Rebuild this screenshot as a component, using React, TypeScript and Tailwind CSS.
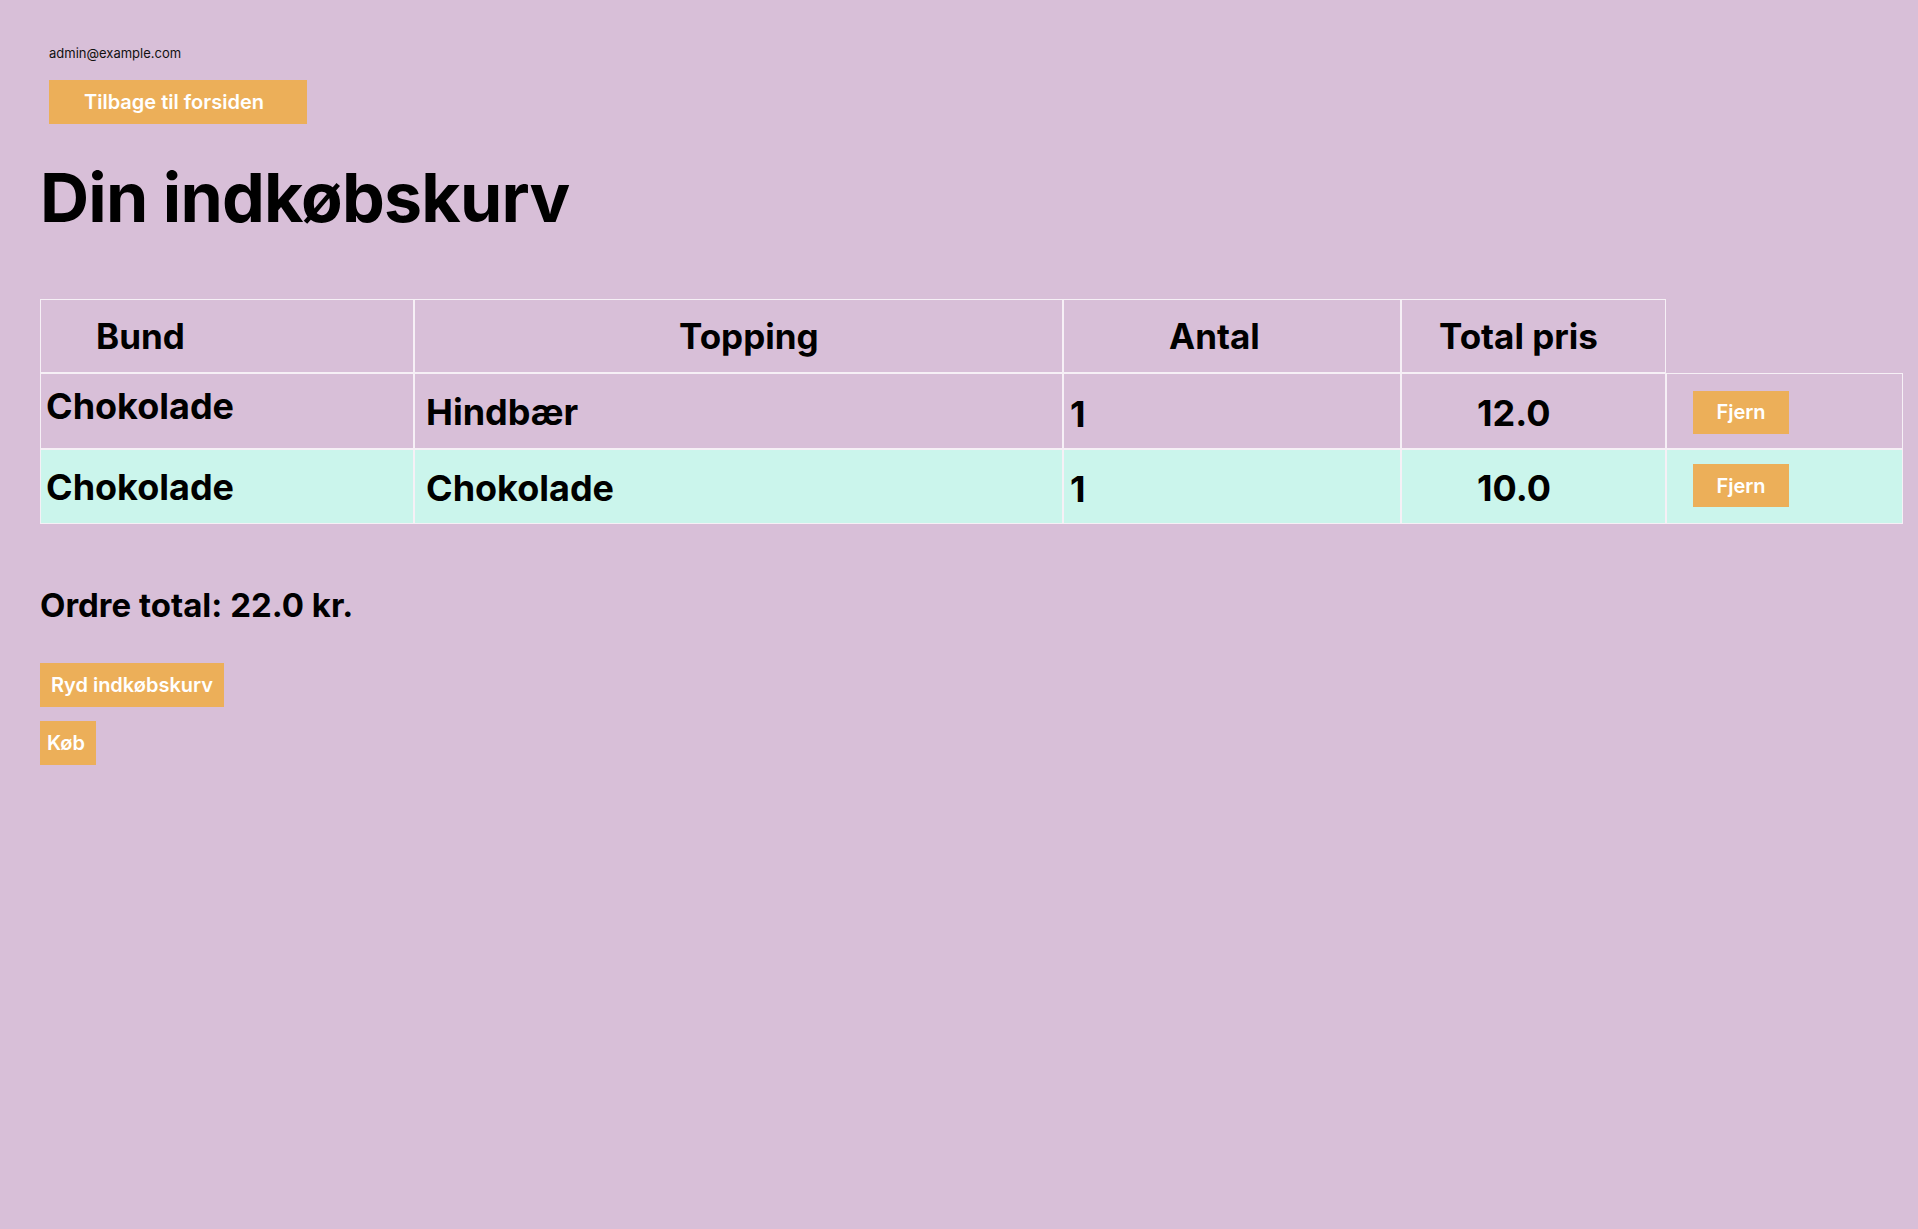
import React from "react";

type Row = { bund: string; topping: string; antal: number; pris: string; bg: string };

const rows: Row[] = [
  { bund: "Chokolade", topping: "Hindbær", antal: 1, pris: "12.0", bg: "bg-[#d8bfd8]" },
  { bund: "Chokolade", topping: "Chokolade", antal: 1, pris: "10.0", bg: "bg-[#cbf5ec]" },
];

export default function App() {
  return (
    <div className="min-h-screen w-full bg-[#d8bfd8] pl-[40px] pr-[15px] font-['Inter',sans-serif] text-black">
      <div className="pl-[9px] pt-[43px]">
        <div className="text-[13px] leading-[20px] text-[#111]">admin@example.com</div>
        <button className="mt-[17px] flex h-[44px] w-[258px] items-center bg-[#ecaf59] pl-[35px] text-left text-[20px] font-semibold text-white">
          Tilbage til forsiden
        </button>
      </div>

      <h1 className="mt-[38px] text-[68px] font-bold leading-[70px] tracking-[-0.8px]">Din indkøbskurv</h1>

      <table className="mt-[67px] w-[1863px] table-fixed border-separate border-spacing-0">
        <colgroup>
          <col className="w-[374px]" />
          <col className="w-[649px]" />
          <col className="w-[338px]" />
          <col className="w-[265px]" />
          <col className="w-[237px]" />
        </colgroup>
        <thead>
          <tr className="h-[74px]">
            <th className="border border-[#f6f0f6] pl-[55px] text-left align-middle text-[35px] font-bold">Bund</th>
            <th className="border border-[#f6f0f6] pl-[264px] text-left align-middle text-[35px] font-bold">Topping</th>
            <th className="border border-[#f6f0f6] pl-[105px] text-left align-middle text-[35px] font-bold">Antal</th>
            <th className="border border-[#f6f0f6] pl-[37px] text-left align-middle text-[35px] font-bold">Total pris</th>
          </tr>
        </thead>
        <tbody>
          {rows.map((r, i) => (
            <tr key={i} className={i === 0 ? "h-[76px]" : "h-[75px]"}>
              <td
                className={`${r.bg} border border-[#f6f0f6] pl-[5px] align-middle text-[36px] font-bold ${
                  i === 0 ? "pb-[10px]" : "pb-0"
                }`}
              >
                {r.bund}
              </td>
              <td className={`${r.bg} border border-[#f6f0f6] pl-[11px] pt-[2px] align-middle text-[36px] font-bold`}>{r.topping}</td>
              <td className={`${r.bg} border border-[#f6f0f6] pl-[6px] pt-[5px] align-middle text-[36px] font-bold`}>{r.antal}</td>
              <td className={`${r.bg} border border-[#f6f0f6] pl-[75px] pt-[3px] align-middle text-[36px] font-bold`}>{r.pris}</td>
              <td className={`${r.bg} border border-[#f6f0f6] pl-[26px] align-middle`}>
                <button
                  className={`flex h-[43px] w-[96px] items-center justify-center bg-[#ecaf59] text-[20px] font-semibold text-white ${
                    i === 0 ? "mt-[2px]" : "mb-[2px]"
                  }`}
                >
                  Fjern
                </button>
              </td>
            </tr>
          ))}
        </tbody>
      </table>

      <h2 className="mt-[61px] text-[33px] font-bold leading-[40px]">Ordre total: 22.0 kr.</h2>

      <div className="mt-[38px] flex flex-col items-start gap-[14px]">
        <button className="flex h-[44px] w-[184px] items-center justify-center bg-[#ecaf59] text-[20px] font-semibold text-white">
          Ryd indkøbskurv
        </button>
        <button className="flex h-[44px] w-[56px] items-center bg-[#ecaf59] pl-[7px] text-left text-[20px] font-semibold text-white">
          Køb
        </button>
      </div>
    </div>
  );
}
